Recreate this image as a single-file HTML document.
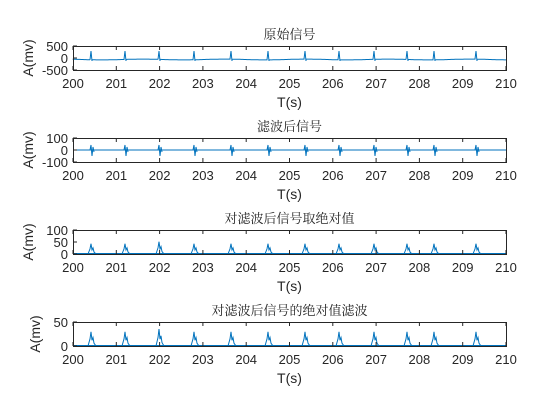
<!DOCTYPE html>
<html><head><meta charset="utf-8"><style>
html,body{margin:0;padding:0;background:#fff;width:560px;height:420px;overflow:hidden}
text{font-family:"Liberation Sans","Noto Sans CJK SC",sans-serif;fill:#262626}
text.t{font-family:"Liberation Serif","Noto Serif CJK SC",serif}
</style></head><body>
<svg id="s" width="560" height="420" xmlns="http://www.w3.org/2000/svg"></svg>
<script>
const s=document.getElementById('s');
const L=73,R=506,W=R-L;
const spikes=[91,125,159,194,231,268,305,339,374,407,434,476];
const plots=[
 {t:46,b:70,title:'原始信号',yt:[['500',0],['0',0.5],['-500',1]],type:0},
 {t:138,b:162,title:'滤波后信号',yt:[['100',0],['0',0.5],['-100',1]],type:1},
 {t:230,b:254,title:'对滤波后信号取绝对值',yt:[['100',0],['50',0.5],['0',1]],type:2},
 {t:322,b:346,title:'对滤波后信号的绝对值滤波',yt:[['50',0],['0',1]],type:3}
];
let h='';
plots.forEach(p=>{
 const H=p.b-p.t, mid=(p.t+p.b)/2;
 let d='';
 if(p.type==0){
  d='M'+L+' '+(mid+1.5);
  for(let x=L;x<=R;x+=1){
   let y=mid+1.5+Math.sin(x/13)*0.4;
   if(spikes.includes(x)){d+=` L${x-1} ${y.toFixed(1)} L${x} ${mid-7} L${x+1} ${mid+3}`;}
   else d+=' L'+x+' '+y.toFixed(1);
  }
 } else if(p.type==1){
  d='M'+L+' '+mid+' L'+R+' '+mid;
  spikes.forEach(sx=>{d+=` M${sx-1} ${mid} L${sx} ${mid-5} L${sx+1} ${mid+6} L${sx+2} ${mid-3} L${sx+3} ${mid+2}`;});
 } else {
  d='M'+L+' '+(p.b-0.5)+' L'+R+' '+(p.b-0.5);
  const k=p.type==2?0.45:0.62;
  spikes.forEach((sx,i)=>{const a=H*k*(i==2?1.2:1)*0.95;
   d+=` M${sx-3} ${p.b} L${sx-1} ${p.b-a*0.5} L${sx} ${p.b-a} L${sx+1} ${p.b-a*0.4} L${sx+2} ${p.b-a*0.6} L${sx+3} ${p.b-a*0.2} L${sx+5} ${p.b}`;});
 }
 h+=`<path d="${d}" fill="none" stroke="#0072bd" stroke-width="1"/>`;
 h+=`<rect x="${L}.5" y="${p.t}.5" width="${W}" height="${H}" fill="none" stroke="#262626" stroke-width="1"/>`;
 for(let i=0;i<=10;i++){
  const x=L+W*i/10;
  h+=`<line x1="${x}" y1="${p.b}" x2="${x}" y2="${p.b-4}" stroke="#262626"/><line x1="${x}" y1="${p.t}" x2="${x}" y2="${p.t+4}" stroke="#262626"/>`;
  h+=`<text x="${x}" y="${p.b+18}" font-size="13" text-anchor="middle">${200+i}</text>`;
 }
 p.yt.forEach(([l,f])=>{const y=p.t+H*f;
  h+=`<line x1="${L}" y1="${y}" x2="${L+4}" y2="${y}" stroke="#262626"/><text x="${L-5}" y="${y+5}" font-size="13" text-anchor="end">${l}</text>`;});
 h+=`<text class="t" x="${(L+R)/2}" y="${p.t-7}" font-size="13" text-anchor="middle">${p.title}</text>`;
 h+=`<text x="${(L+R)/2}" y="${p.b+37}" font-size="14" text-anchor="middle">T(s)</text>`;
 const lx=p.type==3?40:33;
 h+=`<text transform="translate(${lx},${mid}) rotate(-90)" font-size="14" text-anchor="middle">A(mv)</text>`;
});
s.innerHTML=h;
</script>
</body></html>
